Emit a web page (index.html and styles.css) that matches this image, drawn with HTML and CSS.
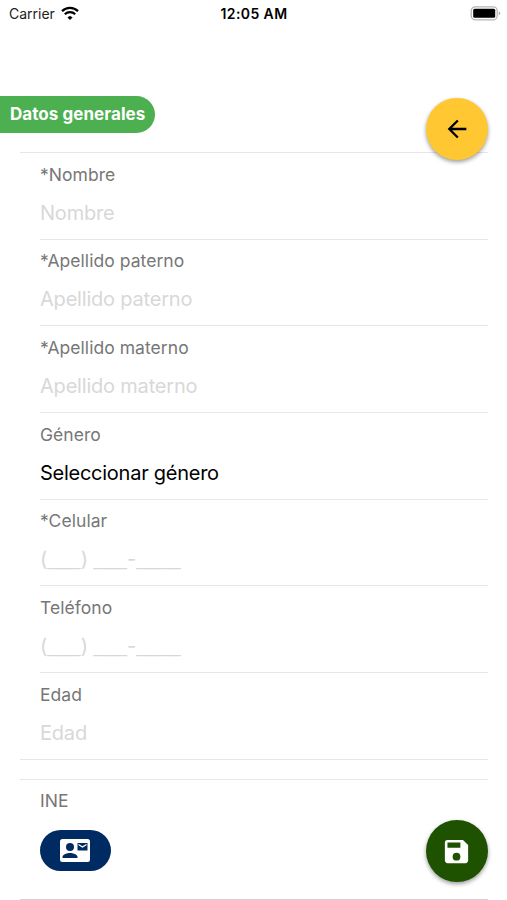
FILE: index.html
```
<!DOCTYPE html>
<html lang="es">
<head>
<meta charset="utf-8">
<title>Datos generales</title>
<link rel="stylesheet" href="styles.css">
</head>
<body>
<header class="status">
  <div class="carrier"><span>Carrier</span>
    <svg class="wifi" viewBox="0 0 18 14" width="18" height="14"><path d="M9 10.1 6.7 11.5 9 13.8 11.3 11.5Z" fill="#000" stroke="#000" stroke-width=".4" stroke-linejoin="round"/><path d="M1 5.1a11.6 11.6 0 0 1 16 0M3.8 8.2a7.5 7.5 0 0 1 10.4 0" fill="none" stroke="#000" stroke-width="2.2"/></svg>
  </div>
  <div class="clock">12:05 AM</div>
  <svg class="battery" viewBox="0 0 31 15" width="31" height="15"><rect x="1.2" y=".8" width="26" height="13" rx="4" fill="#fff" stroke="#b5b5b5" stroke-width="1.3"/><rect x="3.2" y="2.800" width="22" height="9" rx="1.5" fill="#000"/><path d="M28.800 5.200q2.400 2.100 0 4.200z" fill="#999"/></svg>
</header>
<h1 class="title">Datos generales</h1>
<button class="fab back" aria-label="Regresar"><svg viewBox="0 0 24 24" width="28" height="28"><path d="M20 11H7.830l5.590-5.590L12 4l-8 8 8 8 1.410-1.410L7.830 13H20z" fill="#000"/></svg></button>
<main>
  <section class="fields">
    <div class="field"><label>*Nombre</label><div class="value">Nombre</div></div>
    <div class="field"><label>*Apellido paterno</label><div class="value">Apellido paterno</div></div>
    <div class="field"><label>*Apellido materno</label><div class="value">Apellido materno</div></div>
    <div class="field"><label>Género</label><div class="value chosen">Seleccionar género</div></div>
    <div class="field"><label>*Celular</label><div class="value mask">(<span>___</span>) <span>___</span>-<span>____</span></div></div>
    <div class="field"><label>Teléfono</label><div class="value mask">(<span>___</span>) <span>___</span>-<span>____</span></div></div>
    <div class="field"><label>Edad</label><div class="value">Edad</div></div>
  </section>
  <section class="document">
    <label>INE</label>
    <button class="card" aria-label="Identificación"><svg viewBox="0 0 30 23" width="30" height="23"><rect width="30" height="23" rx="2.500" fill="#fff"/><g fill="#002b62"><circle cx="10" cy="8" r="4"/><path d="M2.500 19v-1.200c0-2.500 5-3.800 7.500-3.800s7.500 1.300 7.500 3.800V19z"/><path d="M17.500 4H27.500v7.500H17.500z"/></g><path d="m18.500 5.600 4 2.500 4-2.500" fill="none" stroke="#fff" stroke-width="1.200"/></svg></button>
  </section>
</main>
<button class="fab save" aria-label="Guardar"><svg viewBox="0 0 24 24" width="31" height="31"><path d="M17 3H5a2 2 0 0 0-2 2v14c0 1.100.890 2 2 2h14c1.100 0 2-.900 2-2V7l-4-4zm-5 16a3 3 0 1 1 0-6 3 3 0 0 1 0 6zm3-10H5V5h10v4z" fill="#fff"/></svg></button>
</body>
</html>
```
FILE: styles.css
```
* { box-sizing: border-box; }
body {
  margin: 0;
  height: 900px;
  overflow: hidden;
  background: #fff;
  color: #000;
  font-family: Inter, "Liberation Sans", sans-serif;
}
button { border: 0; padding: 0; display: flex; align-items: center; justify-content: center; }
svg { display: block; }
.status {
  height: 27px;
  padding: 0 6px 0 9px;
  display: grid;
  grid-template-columns: 1fr auto 1fr;
  align-items: center;
  font-size: 14px;
}
.carrier { display: flex; align-items: center; gap: 6px; color: #222; }
.wifi { margin-top: -2px; }
.clock { font-weight: 600; letter-spacing: .4px; margin-right: 2px; }
.battery { justify-self: end; margin-top: -1px; }
.title {
  margin: 69px 0 0;
  width: 155px;
  height: 37px;
  padding-left: 10px;
  border-radius: 0 18.500px 18.500px 0;
  background: #4caf50;
  color: #fff;
  font-size: 17px;
  line-height: 36px;
  font-weight: 700;
  letter-spacing: .05px;
  white-space: nowrap;
}
.fab {
  position: absolute;
  left: 426px;
  width: 62px;
  height: 62px;
  border-radius: 50%;
  box-shadow: 0 2px 4px rgba(0, 0, 0, .4);
}
.back { top: 98px; background: #ffc833; }
.save { top: 820px; background: #1e5200; }
.save svg { margin-left: -1px; }
main { margin: 19px 19px 0 20px; }
.fields { border-top: 1px solid #e7e7e7; border-bottom: 1px solid #e7e7e7; padding-left: 20px; height: 608px; }
.field { height: 86.700px; padding-top: 9.500px; border-bottom: 1px solid #e7e7e7; }
.field:last-child { border-bottom: 0; }
label { display: block; height: 24px; line-height: 24px; font-size: 17.500px; letter-spacing: .05px; color: #777; }
.value { margin-top: 13px; height: 26px; line-height: 26px; font-size: 20px; letter-spacing: -.2px; color: #d8d8d8; white-space: nowrap; }
.chosen { color: #000; letter-spacing: -.26px; }
.mask { letter-spacing: 0; }
.mask span { font-family: "Liberation Sans", sans-serif; line-height: 1; vertical-align: 1px; }
.document {
  margin-top: 19px;
  height: 121px;
  padding: 9px 0 0 20px;
  border-top: 1px solid #e7e7e7;
  border-bottom: 1px solid #d2d2d2;
}
.card { margin-top: 17px; width: 71px; height: 41px; border-radius: 21px; background: #002b62; }
.card svg { margin-right: 1px; }
```
